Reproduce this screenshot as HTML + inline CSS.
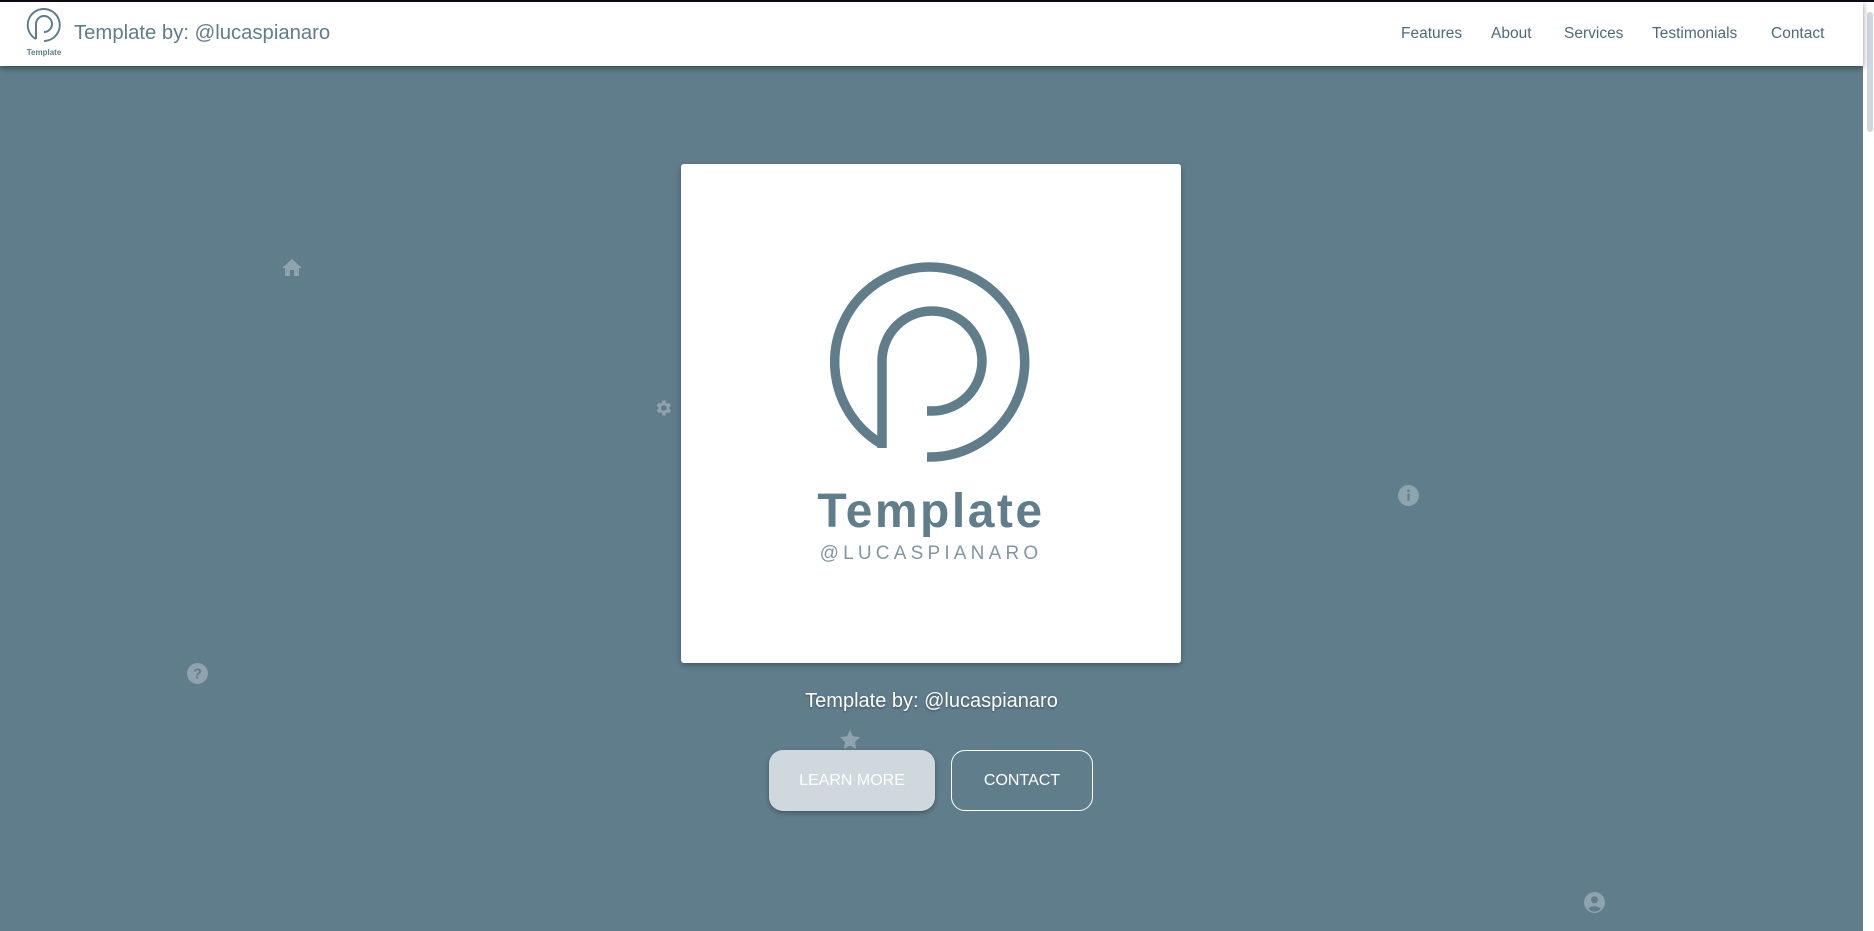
<!DOCTYPE html>
<html><head><meta charset="utf-8">
<style>
*{margin:0;padding:0;box-sizing:border-box}
html,body{width:1874px;height:931px;overflow:hidden;background:#fff;font-family:"Liberation Sans",sans-serif}
#top{position:absolute;left:0;top:0;width:1874px;height:2px;background:#0b0b18}
#main{position:absolute;left:0;top:2px;width:1863px;height:929px;background:#607d8b}
header{position:absolute;left:0;top:2px;width:1863px;height:64px;background:#fff;box-shadow:0 2px 6px rgba(0,0,0,.45);z-index:2}
.title{position:absolute;left:74px;top:20px;font-size:20.3px;color:#607d8b;font-weight:300}
nav a{position:absolute;top:23px;font-size:15.5px;color:#4f6a78;text-decoration:none}
#sb{position:absolute;left:1863px;top:2px;width:11px;height:929px;background:#fff}
#thumb{position:absolute;left:1867px;top:12px;width:6px;height:120px;background:#cfd8df;border-radius:3px}
.card{position:absolute;left:681px;top:164px;width:500px;height:499px;background:#fff;border-radius:3px;box-shadow:0 2px 6px rgba(0,0,0,.3)}
.ic{position:absolute;fill:#8ea3ad}
.sub{position:absolute;left:0;width:1863px;top:690px;text-align:center;color:#fff;font-size:20px;text-shadow:0 1px 2px rgba(0,0,0,.4)}
.btn{position:absolute;top:750px;height:61px;border-radius:14px;color:#fff;font-size:16px;display:flex;align-items:center;justify-content:center}
</style></head><body>
<div id="top"></div>
<div id="main"></div>
<header>
<svg style="position:absolute;left:22px;top:6px" width="44" height="52" viewBox="0 0 44 52">
<path d="M22 33 A16 16 0 1 0 14 31" fill="none" stroke="#607d8b" stroke-width="2"/>
<path d="M14 31 L14 16 A8 8 0 1 1 22 24" fill="none" stroke="#607d8b" stroke-width="2"/>
<text x="22" y="47" font-size="8" font-weight="bold" fill="#607d8b" text-anchor="middle" font-family="Liberation Sans">Template</text>
</svg>
<div class="title">Template by: @lucaspianaro</div>
<nav>
<a style="left:1401px">Features</a><a style="left:1491px">About</a><a style="left:1564px">Services</a><a style="left:1652px">Testimonials</a><a style="left:1771px">Contact</a>
</nav>
</header>
<div id="sb"></div><div id="thumb"></div>
<div class="card"></div>
<svg style="position:absolute;left:0;top:0" width="1863" height="931">
<path d="M927 457 A95 95 0 1 0 880 443" fill="none" stroke="#607d8b" stroke-width="9.5"/>
<path d="M882 448 L882 361 A50 50 0 1 1 932 411 L927 411" fill="none" stroke="#607d8b" stroke-width="9.5" stroke-linecap="butt"/>
<text x="931" y="527" font-size="48" font-weight="bold" fill="#607d8b" text-anchor="middle" font-family="Liberation Sans" letter-spacing="2.5">Template</text>
<text x="931" y="559" font-size="19" fill="#7f97a3" text-anchor="middle" font-family="Liberation Sans" letter-spacing="4.2">@LUCASPIANARO</text>
</svg>
<svg class="ic" style="left:282px;top:259px" width="20" height="18" viewBox="0 0 20 18"><path d="M10 0 L20 9 L17 9 L17 17 L12 17 L12 11 L8 11 L8 17 L3 17 L3 9 L0 9Z"/></svg>
<svg class="ic" style="left:653px;top:398px" width="20" height="20" viewBox="0 0 24 24"><path d="M19.4 13a7.5 7.5 0 000-2l2.1-1.6-2-3.5-2.5 1a7.5 7.5 0 00-1.7-1L15 3h-4l-.4 2.7a7.5 7.5 0 00-1.7 1l-2.5-1-2 3.5L6.6 11a7.5 7.5 0 000 2l-2.1 1.6 2 3.5 2.5-1a7.5 7.5 0 001.7 1L11 21h4l.4-2.7a7.5 7.5 0 001.7-1l2.5 1 2-3.5zM13 15.5a3.5 3.5 0 110-7 3.5 3.5 0 010 7z"/></svg>
<svg class="ic" style="left:1398px;top:485px" width="21" height="21" viewBox="0 0 20 20"><circle cx="10" cy="10" r="10"/><rect x="9" y="8" width="2" height="7" fill="#607d8b"/><circle cx="10" cy="5.5" r="1.2" fill="#607d8b"/></svg>
<svg class="ic" style="left:187px;top:663px" width="21" height="21" viewBox="0 0 20 20"><circle cx="10" cy="10" r="10"/><text x="10" y="15" font-size="14" font-weight="bold" fill="#607d8b" text-anchor="middle" font-family="Liberation Sans">?</text></svg>
<svg class="ic" style="left:840px;top:730px" width="20" height="19" viewBox="0 0 24 23"><path d="M12 0l3.7 7.5 8.3 1.2-6 5.8 1.4 8.3L12 18.9 4.6 22.8 6 14.5 0 8.7l8.3-1.2z"/></svg>
<svg class="ic" style="left:1584px;top:892px" width="21" height="21" viewBox="0 0 20 20"><circle cx="10" cy="10" r="10"/><circle cx="10" cy="7.5" r="3.3" fill="#607d8b"/><path d="M4 16a7 5 0 0112 0a8 8 0 01-12 0z" fill="#607d8b"/></svg>
<div class="sub">Template by: @lucaspianaro</div>
<div class="btn" style="left:769px;width:166px;background:#cfd8dd;box-shadow:0 2px 5px rgba(0,0,0,.3)">LEARN MORE</div>
<div class="btn" style="left:951px;width:142px;border:1px solid #fff">CONTACT</div>
</body></html>
